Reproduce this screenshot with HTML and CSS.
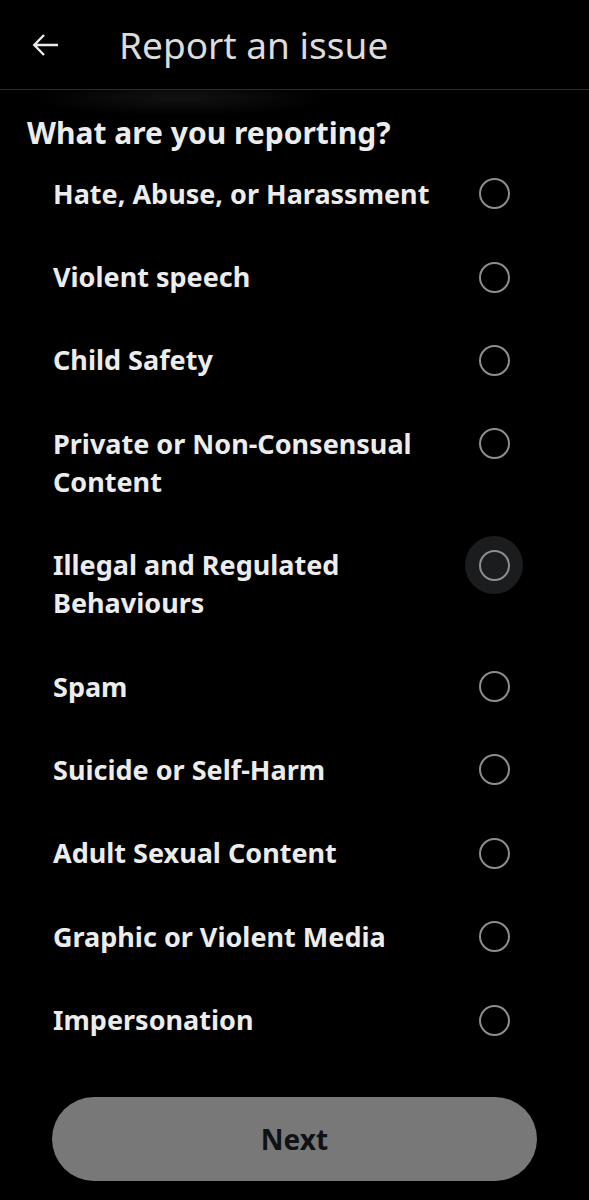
FILE: index.html
```html
<!DOCTYPE html>
<html lang="en">
    <head>
        <meta charset="utf-8">
        <title>Report an issue</title>
        <link rel="stylesheet" href="styles.css">
    </head>
    <body>
        <div class="topbar">
            <span class="back">
                <svg width="32" height="32" viewBox="0 0 24 24"><path d="M21 12H3.5M10.5 4.5 3.2 12l7.3 7.5" fill="none" stroke="#e7e9ea" stroke-width="1.8"/></svg>
            </span>
            <span class="title">Report an issue</span>
        </div>
        <div class="content">
            <h2 class="question">What are you reporting?</h2>
            <ul class="options">
                <li class="option"><span class="label">Hate, Abuse, or Harassment</span><span class="radio"><i></i></span></li>
                <li class="option"><span class="label">Violent speech</span><span class="radio"><i></i></span></li>
                <li class="option"><span class="label">Child Safety</span><span class="radio"><i></i></span></li>
                <li class="option"><span class="label">Private or Non-Consensual Content</span><span class="radio"><i></i></span></li>
                <li class="option"><span class="label">Illegal and Regulated Behaviours</span><span class="radio hover"><i></i></span></li>
                <li class="option"><span class="label">Spam</span><span class="radio"><i></i></span></li>
                <li class="option"><span class="label">Suicide or Self-Harm</span><span class="radio"><i></i></span></li>
                <li class="option"><span class="label">Adult Sexual Content</span><span class="radio"><i></i></span></li>
                <li class="option"><span class="label">Graphic or Violent Media</span><span class="radio"><i></i></span></li>
                <li class="option"><span class="label">Impersonation</span><span class="radio"><i></i></span></li>
            </ul>
            <button class="next">Next</button>
        </div>
    </body>
</html>
```
FILE: styles.css
```css
body {
    margin: 0;
    background-color: #000;
    color: #e7e9ea;
    font-family: "Noto Sans", "Open Sans", sans-serif;
}
.topbar {
    display: flex;
    align-items: center;
    height: 89px;
    border-bottom: 1px solid #2a2d30;
}
.back {
    display: flex;
    width: 32px;
    margin-left: 30px;
}
.title {
    margin-left: 57px;
    font-size: 37px;
    color: #dcdcdc;
}
.content {
    background: radial-gradient(ellipse 150px 18px at 180px 8px, rgba(255,255,255,0.07), transparent);
}
.question {
    margin: 0;
    padding: 24px 0 0 27px;
    font-size: 30px;
    line-height: 38px;
    font-weight: 700;
    color: #ececec;
}
.options {
    list-style: none;
    margin: 0;
    padding: 0;
}
.option {
    display: flex;
    align-items: flex-start;
    padding: 22.7px 66px 22.7px 53px;
}
.label {
    flex: 1;
    font-size: 27px;
    line-height: 38px;
    font-weight: 700;
    color: #ececec;
    padding-right: 20px;
}
.radio {
    display: flex;
    align-items: center;
    justify-content: center;
    width: 58px;
    height: 58px;
    margin: -10px 0;
    border-radius: 50%;
}
.radio.hover {
    background-color: #1b1c1d;
}
.radio i {
    width: 27px;
    height: 27px;
    border: 2.6px solid #8e8e8e;
    border-radius: 50%;
}
.next {
    display: block;
    width: 485px;
    height: 84px;
    margin: 35px 0 0 52px;
    border: none;
    border-radius: 42px;
    background-color: #787878;
    color: #0f1214;
    font-family: inherit;
    font-size: 28px;
    font-weight: 700;
}
```
